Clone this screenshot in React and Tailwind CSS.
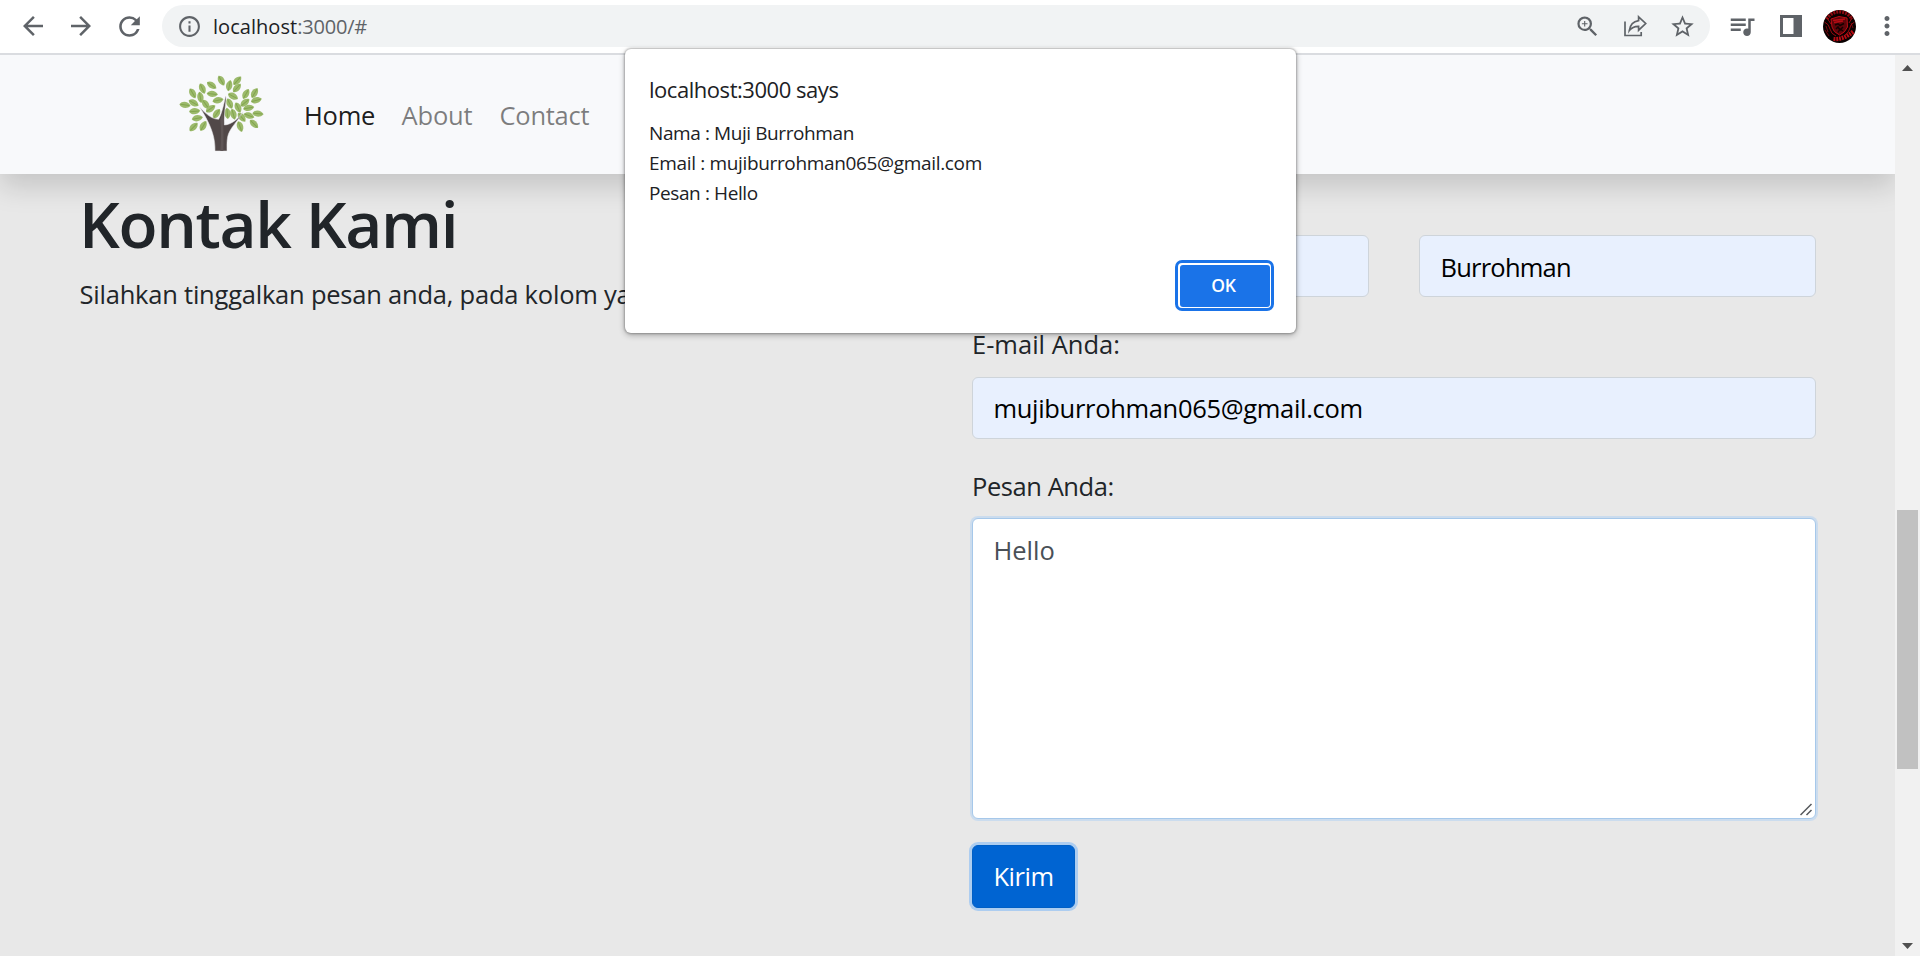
import React from "react";
import {
  MdArrowBack,
  MdArrowForward,
  MdRefresh,
  MdInfoOutline,
  MdZoomIn,
  MdStarBorder,
  MdQueueMusic,
  MdMoreVert,
} from "react-icons/md";

// [cx, cy, rotation] of every leaf in the logo
const LEAVES = [
  [75, 135, 8], [98, 100, 60], [127, 86, 65], [155, 76, 35], [184, 62, 60], [208, 77, -78],
  [232, 62, -48], [231, 84, -48], [157, 102, 5], [174, 121, -12], [219, 109, 28], [101, 129, 30],
  [121, 112, 80], [137, 133, 55], [104, 154, -5], [112, 175, -10], [101, 201, -45], [130, 198, -60],
  [152, 146, -35], [170, 161, -55], [209, 131, 65], [202, 160, 85], [220, 163, 75], [234, 143, 65],
  [258, 102, -60], [284, 99, -60], [255, 128, -40], [289, 121, -15], [266, 144, -10], [294, 161, 5],
  [267, 167, 20], [282, 192, 45], [240, 200, 70], [245, 172, 50],
];

function TreeLogo() {
  return (
    <svg className="h-[110px] w-[120px] shrink-0" viewBox="0 0 360 330">
      {LEAVES.map(([x, y, r]) => (
        <g key={`${x}-${y}`} transform={`translate(${x} ${y}) rotate(${r})`}>
          <path d="M-17 0 C-10 -13 8 -13 17 0 C8 12 -10 12 -17 0Z" fill="#9cba6c" />
          <path d="M-14 0 L13 0" stroke="#82a54e" strokeWidth="3" />
        </g>
      ))}
      <path
        d="M165 273 C166 240 158 200 119 142 C143 168 160 178 176 178 C186 160 192 130 197 108 C202 114 191 150 193 195 C215 194 235 176 249 155 C233 185 208 205 203 230 C200 245 201 260 201 273Z"
        fill="#514848"
        stroke="#e9e8ea"
        strokeWidth="1.5"
      />
      <path d="M181 273 C183 240 184 210 181 180 L190 150 C189 200 192 240 190 273Z" fill="#5f5656" />
    </svg>
  );
}

function ShareIcon() {
  return (
    <svg className="h-6 w-6" viewBox="0 0 24 24" fill="none" stroke="#5f6368" strokeWidth="1.7">
      <path d="M2 7.5 V21.5 H18.2 V18" />
      <path d="M15.6 2.8 L22.7 9.5 L15.6 16.2 V12.4 C11.4 12.3 8.6 13.6 6.3 16.6 C7 11.4 10 7.4 15.6 6.6Z" />
    </svg>
  );
}

function Avatar() {
  return (
    <svg className="h-[33px] w-[33px]" viewBox="0 0 33 33">
      <circle cx="16.5" cy="16.5" r="16.5" fill="#0a0000" />
      <path d="M8 9 L16 6.5 L24 8 L24.5 17 Q22 23 16.5 25 Q10 22 9 17Z" fill="#5e050a" />
      <g fill="none" stroke="#b80c14">
        <path d="M3.8 9.2 A14.6 14.6 0 0 1 29.2 9.2" strokeWidth="3.4" strokeDasharray="2 1" opacity="0.75" />
        <path d="M10.5 29 Q20 30 30.5 21.5" strokeWidth="4.2" strokeDasharray="1.9 0.9" />
        <path d="M8 9 L16 6.5 L24 8 L24.5 17 Q22 23 16.5 25 Q10 22 9 17Z" strokeWidth="1" />
        <path d="M1.5 12 Q6 14 7 19 Q8 24 13 26 M31.5 12 Q27 14 26.5 19 Q26 22 22 25 M4 8 L8 14 M29 8 L26 13" strokeWidth="1" opacity="0.8" />
        <path d="M10 10.5 L22 9 M11 12.5 L20 11" strokeWidth="1.3" />
        <path d="M2 20 L6 26 M3 16 L5 22 M28 13 L30 18" strokeWidth="1" opacity="0.6" />
      </g>
      <path d="M12 15 L15 13.8 L17 15.5 L21 13.5 M13 19 L15 17 L17 20 L20 17 M15 22.5 L17 19 L20 21" fill="none" stroke="#150000" strokeWidth="1.5" />
    </svg>
  );
}

function BrowserBar() {
  return (
    <header className="flex h-[55px] w-full items-start border-b-2 border-[#dadce0] bg-white text-[#5f6368]">
      <div className="flex h-[52px] w-[162px] items-center pl-[18px]">
        <MdArrowBack size={30} />
        <MdArrowForward size={30} className="ml-[18px]" />
        <MdRefresh size={31} className="ml-[18px]" />
      </div>
      <div className="mt-[5px] flex h-[42px] w-[1548px] items-center rounded-full bg-[#f1f3f4]">
        <MdInfoOutline size={25} className="ml-[14.5px]" />
        <div className="ml-[11.5px] flex pt-px text-[20px] leading-[42px]">
          <span className="tracking-[0.04px] text-[#202124]">localhost</span>
          <span className="tracking-[-0.2px]">:3000/#</span>
        </div>
        <div className="ml-auto flex items-center pr-[14px]">
          <MdZoomIn size={27} />
          <div className="ml-[22px]">
            <ShareIcon />
          </div>
          <MdStarBorder size={27} className="ml-[22px]" />
        </div>
      </div>
      <div className="flex h-[52px] flex-1 items-center pl-[17px]">
        <MdQueueMusic size={30} />
        <svg className="ml-[23px] h-[22px] w-[22px]" viewBox="0 0 22 22">
          <path d="M0 0H22V22H0Z M3 3V19H13.5V3Z" fill="#5f6368" fillRule="evenodd" />
        </svg>
        <div className="ml-[21px]">
          <Avatar />
        </div>
        <MdMoreVert size={30} className="ml-[16px]" />
      </div>
    </header>
  );
}

function Navbar() {
  return (
    <nav className="relative z-10 flex h-[119px] w-full items-center bg-[#f8f9fb] pl-[160px] text-[25.5px] leading-[40px] shadow-[0_13px_26px_rgba(0,0,0,0.15)]">
      <TreeLogo />
      <a className="ml-[24px] pt-px tracking-[-0.25px] text-black/90">Home</a>
      <a className="ml-[26.5px] pt-px tracking-[-0.18px] text-black/50">About</a>
      <a className="ml-[27px] pt-px tracking-[-0.25px] text-black/50">Contact</a>
    </nav>
  );
}

const FIELD = "flex h-[62px] items-center rounded-[6px] border border-[#ced4da] bg-[#e8f0fe] pl-[20.5px] text-black";

function ContactForm() {
  return (
    <form className="mt-[61px] flex w-[844px] flex-col">
      <div className="flex justify-between">
        <div className={`${FIELD} w-[397px] pt-[2px] tracking-[-0.3px]`}>Muji</div>
        <div className={`${FIELD} w-[397px] pt-[2px] tracking-[-0.78px]`}>Burrohman</div>
      </div>
      <label className="mt-[27px] leading-[40px]">E-mail Anda:</label>
      <div className={`${FIELD} mt-[13px] tracking-[-0.32px]`}>mujiburrohman065@gmail.com</div>
      <label className="mt-[27px] leading-[40px] tracking-[-0.43px]">Pesan Anda:</label>
      <div className="mt-[12px] flex h-[301px] justify-between rounded-[6px] border border-[#a6c8ea] bg-white pt-[12px] pl-[20.5px] leading-[39px] text-[#495057] shadow-[0_0_0_2px_#cbdcee]">
        Hello
        <svg className="mr-[2px] mb-[2px] h-[13px] w-[13px] self-end" viewBox="0 0 13 13" fill="none" stroke="#55585c" strokeWidth="1.5">
          <path d="M0.5 12 L11.5 1 M6.5 12 L11.5 7" />
        </svg>
      </div>
      <button
        type="button"
        className="mt-[26px] h-[63px] w-[103px] rounded-[6px] border border-[#005fc5] bg-[#0064d2] tracking-[-0.48px] text-white shadow-[0_0_0_3px_#adcdf0]"
      >
        Kirim
      </button>
    </form>
  );
}

function Scrollbar() {
  return (
    <div className="flex w-[25px] shrink-0 flex-col items-center bg-[#f1f1f1]">
      <svg className="mt-[10px] h-[6px] w-[11px]" viewBox="0 0 11 6">
        <path d="M0 6 L5.5 0 L11 6Z" fill="#505050" />
      </svg>
      <div className="mt-[439px] mr-px h-[259px] w-[21px] bg-[#c1c1c1]" />
      <svg className="mt-auto mb-[7px] h-[6px] w-[11px]" viewBox="0 0 11 6">
        <path d="M0 0 L5.5 6 L11 0Z" fill="#505050" />
      </svg>
    </div>
  );
}

function AlertDialog() {
  return (
    <div
      role="alertdialog"
      className="absolute top-[49px] left-[625px] z-20 flex h-[284px] w-[671px] flex-col rounded-[6px] bg-white pt-[25px] pl-[24px] text-[19px] leading-[30px] text-[#202124] shadow-[0_0_2px_1px_rgba(0,0,0,0.22),0_2px_6px_rgba(0,0,0,0.3)]"
    >
      <h2 className="text-[22px] leading-[30px] tracking-[-0.46px]">localhost:3000 says</h2>
      <p className="mt-[14px] tracking-[-0.41px]">Nama : Muji Burrohman</p>
      <p className="tracking-[-0.34px]">Email : mujiburrohman065@gmail.com</p>
      <p className="tracking-[-0.4px]">Pesan : Hello</p>
      <button
        type="button"
        className="mt-auto mr-[22px] mb-[22px] flex h-[51px] w-[99px] self-end rounded-[7px] border-[3px] border-[#1a73e8] bg-white p-[1.5px]"
      >
        <span className="flex-1 rounded-[3px] bg-[#1a73e8] pr-[2px] text-[17.5px] leading-[41px] font-semibold tracking-[-0.3px] text-white">
          OK
        </span>
      </button>
    </div>
  );
}

export default function App() {
  return (
    <div className="relative flex h-[956px] w-[1920px] flex-col overflow-hidden bg-white font-['Open_Sans',sans-serif] whitespace-nowrap">
      <BrowserBar />
      <div className="flex min-h-0 flex-1">
        <div className="flex w-[1895px] flex-col overflow-hidden bg-[#e8e8e8] text-[25.5px] text-[#212529]">
          <Navbar />
          <main className="flex pl-[79px]">
            <section className="w-[893px] overflow-hidden">
              <h1 className="mt-[11px] text-[64px] leading-[78px] font-semibold tracking-[-1.35px]">Kontak Kami</h1>
              <p className="mt-[11px] pl-[0.5px] leading-[40px] tracking-[-0.22px]">
                Silahkan tinggalkan pesan anda, pada kolom yang tersedia
              </p>
            </section>
            <ContactForm />
          </main>
        </div>
        <Scrollbar />
      </div>
      <AlertDialog />
    </div>
  );
}
